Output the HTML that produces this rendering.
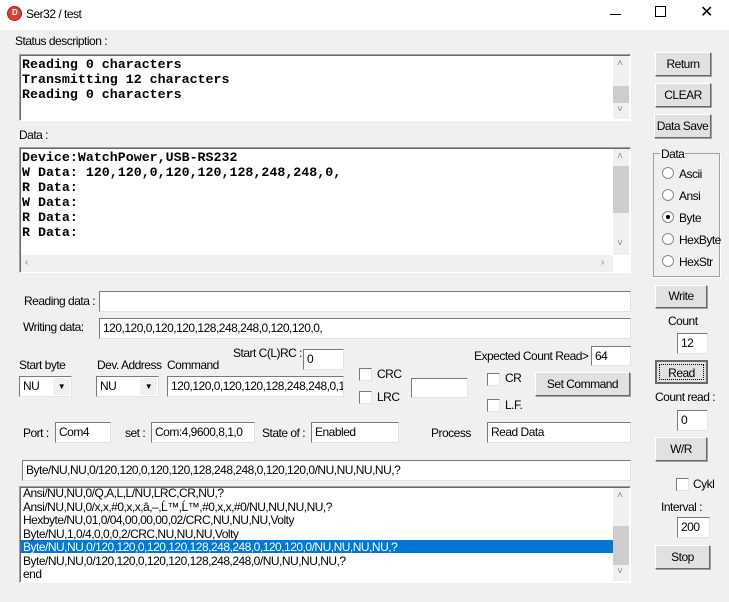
<!DOCTYPE html>
<html><head><meta charset="utf-8"><style>
*{box-sizing:border-box;margin:0;padding:0}
body{width:729px;height:602px;background:#f0f0f0;position:relative;overflow:hidden;font-family:"Liberation Sans",sans-serif;font-size:12px;color:#000;letter-spacing:-0.5px}
.a{position:absolute;white-space:nowrap}
.tb{position:absolute;left:0;top:0;width:729px;height:30px;background:#fff}
.box{position:absolute;background:#fff;border:1px solid #a0a0a0;border-right-color:#fff;border-bottom-color:#fff;box-shadow:inset 1px 1px 0 #696969}
.in{position:absolute;background:#fff;border:1px solid #7a7a7a;border-right-color:#e3e3e3;border-bottom-color:#e3e3e3;padding:2px 0 0 3px;font-size:12px;line-height:14px;white-space:nowrap}
.btn{position:absolute;background:#e1e1e1;border:1px solid #fff;border-right-color:#696969;border-bottom-color:#696969;box-shadow:1px 1px 0 #a0a0a0;text-align:center;font-size:12px}
.mono{font-family:"Liberation Mono",monospace;font-weight:bold;font-size:13.3px;line-height:15px;letter-spacing:0}
.sb{position:absolute;background:#f0f0f0}
.th{position:absolute;background:#cdcdcd}
.ar{position:absolute;color:#888;font-size:10px;letter-spacing:0}
.cb{position:absolute;width:13px;height:13px;background:#fff;border:1px solid #7a7a7a;border-right-color:#e3e3e3;border-bottom-color:#e3e3e3}
.rd{position:absolute;width:12px;height:12px;border-radius:50%;background:#fff;border:1px solid #8a8a8a}
</style></head><body>
<div class="tb"></div>
<div class="a" style="left:7px;top:6px;width:15px;height:15px;border-radius:50%;background:#d9403a;border:1px solid #a02020"></div>
<div class="a" style="left:12px;top:8px;color:#fff;font-size:8px;font-weight:bold">D</div>
<div class="a" style="left:26px;top:7px;font-size:12px">Ser32 / test</div>
<div class="a" style="left:610px;top:14px;width:11px;height:1px;background:#000"></div>
<div class="a" style="left:655px;top:6px;width:11px;height:11px;border:1px solid #000"></div>
<div class="a" style="left:700px;top:2px;font-size:16px;font-weight:300">✕</div>

<div class="a" style="left:15px;top:34px">Status description :</div>
<div class="box" style="left:19px;top:54px;width:612px;height:67px"></div>
<div class="a mono" style="left:22px;top:57px">Reading 0 characters<br>Transmitting 12 characters<br>Reading 0 characters</div>
<div class="sb" style="left:613px;top:56px;width:16px;height:63px"></div>
<div class="th" style="left:613px;top:86px;width:16px;height:17px"></div>
<div class="ar" style="left:617px;top:58px">˄</div><div class="ar" style="left:617px;top:104px">˅</div>

<div class="a" style="left:19px;top:128px">Data :</div>
<div class="box" style="left:19px;top:147px;width:612px;height:126px"></div>
<div class="a mono" style="left:22px;top:150px">Device:WatchPower,USB-RS232<br>W Data: 120,120,0,120,120,128,248,248,0,<br>R Data:<br>W Data:<br>R Data:<br>R Data:</div>
<div class="sb" style="left:613px;top:149px;width:16px;height:106px"></div>
<div class="th" style="left:613px;top:166px;width:16px;height:47px"></div>
<div class="ar" style="left:617px;top:151px">˄</div><div class="ar" style="left:617px;top:238px">˅</div>
<div class="sb" style="left:21px;top:255px;width:592px;height:17px"></div>
<div class="ar" style="left:25px;top:257px">‹</div><div class="ar" style="left:601px;top:257px">›</div>

<div class="btn" style="left:655px;top:52px;width:56px;height:24px;line-height:22px">Return</div>
<div class="btn" style="left:655px;top:83px;width:56px;height:24px;line-height:22px">CLEAR</div>
<div class="btn" style="left:654px;top:114px;width:57px;height:24px;line-height:22px">Data Save</div>

<div class="a" style="left:653px;top:153px;width:67px;height:124px;border:1px solid #a0a0a0;box-shadow:1px 1px 0 #fff"></div>
<div class="a" style="left:660px;top:147px;background:#f0f0f0;padding:0 1px">Data</div>
<div class="rd" style="left:662px;top:167px"></div><div class="a" style="left:679px;top:167px">Ascii</div>
<div class="rd" style="left:662px;top:189px"></div><div class="a" style="left:679px;top:189px">Ansi</div>
<div class="rd" style="left:662px;top:211px"></div><div class="a" style="left:666px;top:215px;width:4px;height:4px;border-radius:50%;background:#000"></div><div class="a" style="left:679px;top:211px">Byte</div>
<div class="rd" style="left:662px;top:233px"></div><div class="a" style="left:679px;top:233px">HexByte</div>
<div class="rd" style="left:662px;top:255px"></div><div class="a" style="left:679px;top:255px">HexStr</div>

<div class="a" style="left:24px;top:294px">Reading data :</div>
<div class="in" style="left:99px;top:291px;width:532px;height:21px"></div>
<div class="a" style="left:23px;top:320px">Writing data:</div>
<div class="in" style="left:99px;top:318px;width:532px;height:21px">120,120,0,120,120,128,248,248,0,120,120,0,</div>

<div class="btn" style="left:655px;top:285px;width:52px;height:23px;line-height:21px">Write</div>
<div class="a" style="left:668px;top:314px">Count</div>
<div class="in" style="left:677px;top:333px;width:31px;height:21px">12</div>
<div class="btn" style="left:655px;top:360px;width:53px;height:24px;line-height:20px;border:2px solid #696969;box-shadow:none"><div style="position:absolute;left:2px;top:2px;right:2px;bottom:2px;border:1px dotted #000;line-height:16px">Read</div></div>
<div class="a" style="left:655px;top:390px">Count read :</div>
<div class="in" style="left:677px;top:410px;width:31px;height:21px">0</div>
<div class="btn" style="left:655px;top:437px;width:52px;height:24px;line-height:22px">W/R</div>

<div class="a" style="left:233px;top:346px">Start C(L)RC :</div>
<div class="in" style="left:303px;top:349px;width:41px;height:21px">0</div>
<div class="a" style="left:19px;top:358px">Start byte</div>
<div class="a" style="left:97px;top:358px">Dev. Address</div>
<div class="a" style="left:167px;top:358px">Command</div>
<div class="in" style="left:19px;top:376px;width:53px;height:21px">NU</div>
<div class="a" style="left:53px;top:378px;width:17px;height:17px;background:#f0f0f0;font-size:8px;text-align:center;line-height:17px">▼</div>
<div class="in" style="left:96px;top:376px;width:63px;height:21px">NU</div>
<div class="a" style="left:140px;top:378px;width:17px;height:17px;background:#f0f0f0;font-size:8px;text-align:center;line-height:17px">▼</div>
<div class="in" style="left:167px;top:376px;width:177px;height:21px;overflow:hidden">120,120,0,120,120,128,248,248,0,1</div>

<div class="cb" style="left:359px;top:368px"></div><div class="a" style="left:377px;top:367px">CRC</div>
<div class="cb" style="left:359px;top:391px"></div><div class="a" style="left:377px;top:390px">LRC</div>
<div class="in" style="left:411px;top:378px;width:57px;height:20px"></div>

<div class="a" style="left:474px;top:349px">Expected Count Read&gt;</div>
<div class="in" style="left:591px;top:346px;width:40px;height:20px">64</div>
<div class="cb" style="left:487px;top:373px"></div><div class="a" style="left:505px;top:371px">CR</div>
<div class="cb" style="left:487px;top:399px"></div><div class="a" style="left:505px;top:398px">L.F.</div>
<div class="btn" style="left:535px;top:372px;width:95px;height:24px;line-height:22px">Set Command</div>

<div class="a" style="left:23px;top:426px">Port :</div>
<div class="in" style="left:55px;top:422px;width:56px;height:21px">Com4</div>
<div class="a" style="left:125px;top:426px">set :</div>
<div class="in" style="left:151px;top:422px;width:104px;height:21px">Com:4,9600,8,1,0</div>
<div class="a" style="left:262px;top:426px">State of :</div>
<div class="in" style="left:311px;top:422px;width:88px;height:21px">Enabled</div>
<div class="a" style="left:431px;top:426px">Process</div>
<div class="in" style="left:487px;top:422px;width:144px;height:21px">Read Data</div>

<div class="in" style="left:22px;top:460px;width:609px;height:21px">Byte/NU,NU,0/120,120,0,120,120,128,248,248,0,120,120,0/NU,NU,NU,NU,?</div>

<div class="box" style="left:19px;top:486px;width:612px;height:97px"></div>
<div class="a" style="left:21px;top:540px;width:592px;height:13px;background:#0078d7"></div>
<div class="a" style="left:23px;top:487px;line-height:13.5px">Ansi/NU,NU,0/Q,A,L,L/NU,LRC,CR,NU,?<br>Ansi/NU,NU,0/x,x,#0,x,x,â,–,Ĺ™,Ĺ™,#0,x,x,#0/NU,NU,NU,NU,?<br>Hexbyte/NU,01,0/04,00,00,00,02/CRC,NU,NU,NU,Volty<br>Byte/NU,1,0/4,0,0,0,2/CRC,NU,NU,NU,Volty<br><span style="color:#fff">Byte/NU,NU,0/120,120,0,120,120,128,248,248,0,120,120,0/NU,NU,NU,NU,?</span><br>Byte/NU,NU,0/120,120,0,120,120,128,248,248,0/NU,NU,NU,NU,?<br>end</div>
<div class="sb" style="left:613px;top:488px;width:16px;height:93px"></div>
<div class="th" style="left:613px;top:526px;width:16px;height:39px"></div>
<div class="ar" style="left:617px;top:490px">˄</div><div class="ar" style="left:617px;top:566px">˅</div>

<div class="cb" style="left:676px;top:478px"></div><div class="a" style="left:693px;top:477px">Cykl</div>
<div class="a" style="left:661px;top:500px">Interval :</div>
<div class="in" style="left:677px;top:517px;width:33px;height:21px">200</div>
<div class="btn" style="left:655px;top:545px;width:55px;height:24px;line-height:22px">Stop</div>
</body></html>
